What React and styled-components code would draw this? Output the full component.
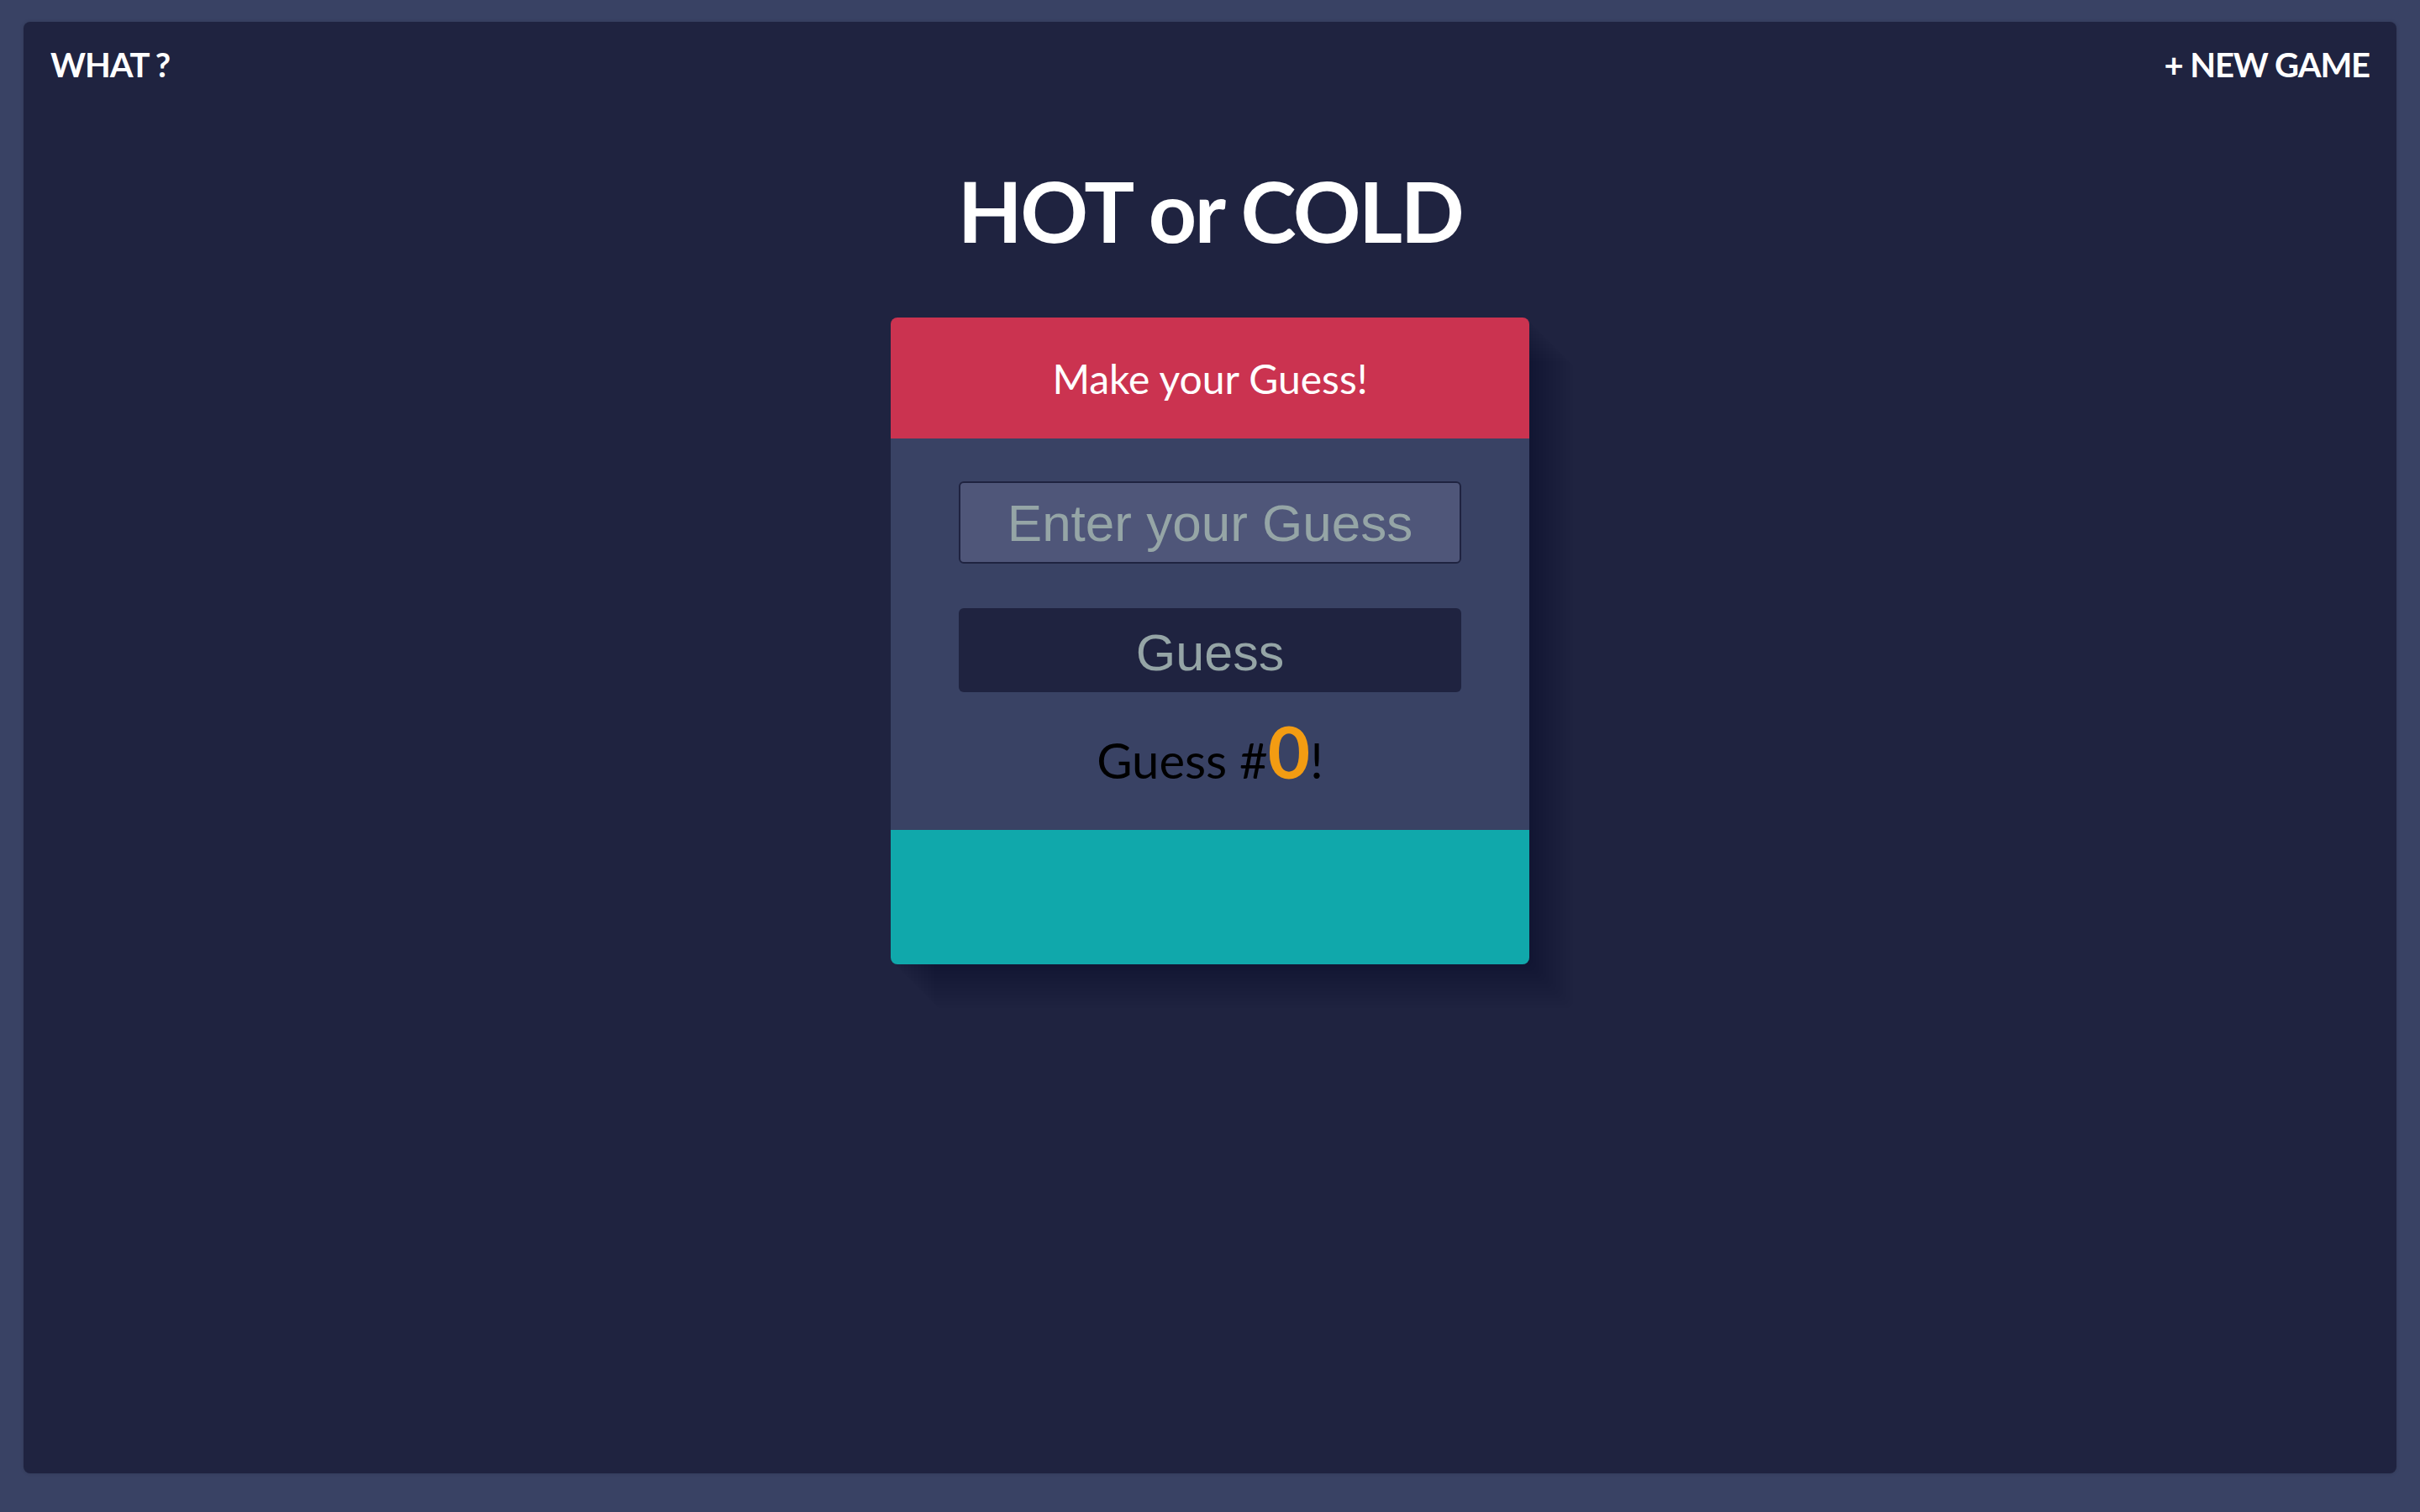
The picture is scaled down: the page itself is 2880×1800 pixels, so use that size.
import React from "react";
import styled, { createGlobalStyle } from "styled-components";

const GlobalStyle = createGlobalStyle`
  * { box-sizing: border-box; }
  html, body { margin: 0; padding: 0; }
  body {
    background: #394264;
    font-family: Lato, "Open Sans", sans-serif;
  }
`;

// long flat shadow: stepped layers, faint each, fading away from the card
const longShadow = Array.from({ length: 13 }, (_, i) => `${(i + 1) * 4}px ${(i + 1) * 4}px 0 rgba(0,0,0,0.008)`).join(", ");

const Page = styled.div`
  min-height: 100vh;
  padding: 26px 28px 46px;
  display: flex;
`;

const Panel = styled.main`
  flex: 1;
  background: #1f2340;
  border-radius: 8px;
  box-shadow: 0 0 4px rgba(0, 0, 0, 0.15);
  display: flex;
  flex-direction: column;
  align-items: center;
`;

const Nav = styled.nav`
  align-self: stretch;
  display: flex;
  justify-content: space-between;
  padding: 27px 32px 0 32px;
`;

const NavLink = styled.a`
  color: #fff;
  font-weight: 700;
  font-size: 40px;
  line-height: 1.2;
  letter-spacing: -1.1px;
  text-transform: uppercase;
  text-decoration: none;
  cursor: pointer;
`;

const Title = styled.h1`
  margin: 89px 0 0;
  color: #fff;
  font-size: 100px;
  font-weight: 700;
  line-height: 1.2;
  letter-spacing: -2.4px;
`;

const Card = styled.section`
  margin-top: 68px;
  width: 760px;
  border-radius: 8px;
  overflow: hidden;
  box-shadow: ${longShadow};
`;

const CardHeader = styled.header`
  height: 144px;
  background: #cb3350;
  color: #fff;
  font-size: 48px;
  display: flex;
  align-items: center;
  justify-content: center;
`;

const CardBody = styled.form`
  background: #394264;
  padding: 51px 81px 0;
  height: 466px;
  display: flex;
  flex-direction: column;
  align-items: stretch;
`;

const GuessInput = styled.input`
  height: 98px;
  background: #4f5679;
  border: 2px solid #1f2340;
  border-radius: 6px;
  color: #95a5a6;
  font-family: "Liberation Sans", Arial, sans-serif;
  font-size: 62px;
  text-align: center;
  outline: none;
  &::placeholder { color: #95a5a6; }
`;

const GuessButton = styled.button`
  margin-top: 53px;
  height: 100px;
  background: #1f2340;
  border: none;
  border-radius: 6px;
  color: #95a5a6;
  font-family: "Liberation Sans", Arial, sans-serif;
  font-size: 61px;
  padding-top: 6px;
  cursor: pointer;
`;

const Counter = styled.p`
  margin: 26px 0 0;
  text-align: center;
  color: #000;
  font-size: 58px;
  line-height: 1.2;
`;

const Count = styled.span`
  color: #f39c12;
  font-weight: 700;
  font-size: 1.5em;
  line-height: 1;
`;

const Feedback = styled.footer`
  height: 160px;
  background: #10a8ab;
`;

export default function App() {
  return (
    <>
      <GlobalStyle />
      <Page>
        <Panel>
          <Nav>
            <NavLink>What ?</NavLink>
            <NavLink>+ New Game</NavLink>
          </Nav>
          <Title>HOT or COLD</Title>
          <Card>
            <CardHeader>Make your Guess!</CardHeader>
            <CardBody onSubmit={(e) => e.preventDefault()}>
              <GuessInput type="text" placeholder="Enter your Guess" />
              <GuessButton type="submit">Guess</GuessButton>
              <Counter>
                Guess #<Count>0</Count>!
              </Counter>
            </CardBody>
            <Feedback />
          </Card>
        </Panel>
      </Page>
    </>
  );
}
